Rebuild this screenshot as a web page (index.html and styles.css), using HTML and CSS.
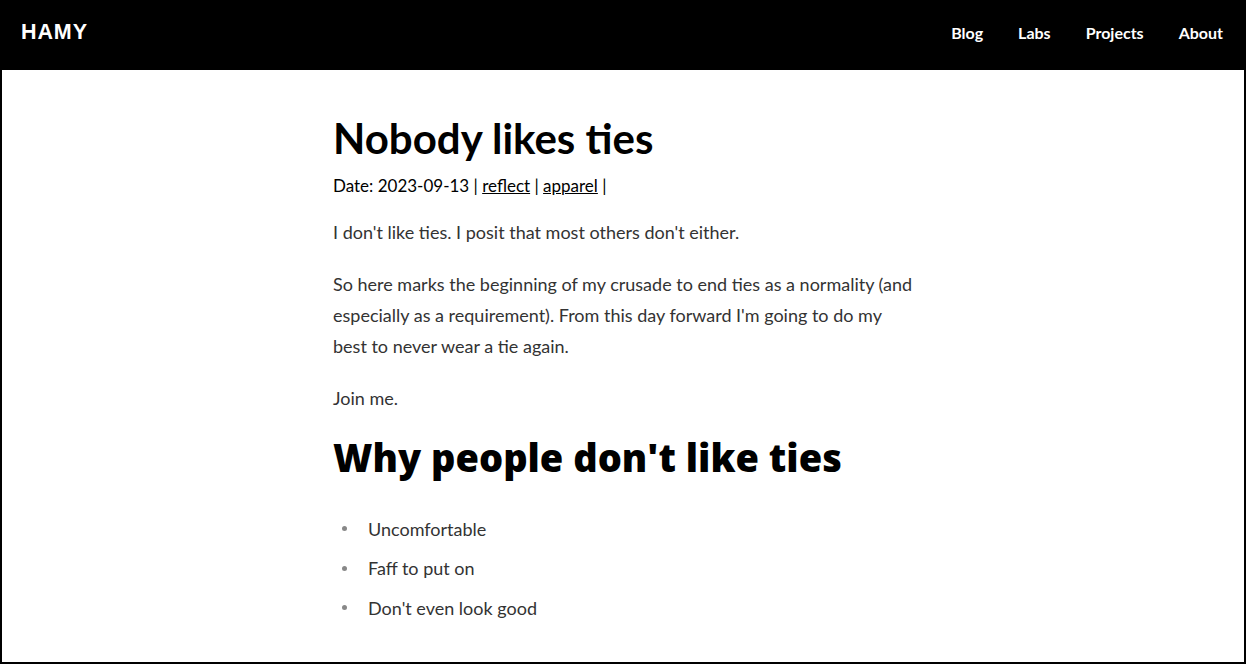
FILE: index.html
```html
<!DOCTYPE html>
<html lang="en">
<head>
<meta charset="utf-8">
<title>Nobody likes ties</title>
<link rel="stylesheet" href="styles.css">
</head>
<body>
<div class="page">
  <header class="topbar">
    <a class="brand" href="#">HAMY</a>
    <nav class="nav">
      <a href="#">Blog</a>
      <a href="#">Labs</a>
      <a href="#">Projects</a>
      <a href="#">About</a>
    </nav>
  </header>
  <main class="post">
    <h1 class="title">Nobody likes ties</h1>
    <p class="meta">Date: 2023-09-13 | <a href="#">reflect</a> | <a href="#">apparel</a> |</p>
    <p>I don't like ties. I posit that most others don't either.</p>
    <p>So here marks the beginning of my crusade to end ties as a normality (and especially as a requirement). From this day forward I'm going to do my best to never wear a tie again.</p>
    <p>Join me.</p>
    <h2 class="section">Why people don't like ties</h2>
    <ul class="list">
      <li>Uncomfortable</li>
      <li>Faff to put on</li>
      <li>Don't even look good</li>
    </ul>
  </main>
</div>
</body>
</html>
```

FILE: styles.css
```css
* { box-sizing: border-box; }
html, body { margin: 0; padding: 0; }
body {
  font-family: Lato, "Open Sans", sans-serif;
  background: #fff;
}
.page {
  border: 2px solid #000;
  border-top: 0;
  height: 664px;
  overflow: hidden;
}
.topbar {
  background: #000;
  height: 70px;
  display: flex;
  align-items: center;
  justify-content: space-between;
  padding: 0 21px 5px 19px;
}
.brand {
  color: #fff;
  text-decoration: none;
  font-family: "Liberation Sans", Arial, sans-serif;
  font-weight: bold;
  font-size: 21.5px;
  letter-spacing: 0.9px;
}
.nav {
  display: flex;
  gap: 35px;
}
.nav a {
  color: #fff;
  text-decoration: none;
  font-weight: bold;
  font-size: 16px;
}
.post {
  max-width: 580px;
  margin: 0 auto;
  color: #333;
  font-size: 18px;
}
.title {
  color: #000;
  font-size: 42px;
  font-weight: 700;
  margin: 43px 0 11px;
  line-height: 1.2;
}
.post p {
  line-height: 31px;
  margin: 0 0 21px;
}
.post p.meta {
  color: #000;
  font-size: 17px;
  line-height: 24px;
  margin-bottom: 19px;
}
.meta a { color: #000; }
.section {
  color: #000;
  font-family: "Open Sans", Lato, sans-serif;
  font-size: 38px;
  font-weight: 800;
  margin: 20.5px 0 36px;
  line-height: 1.2;
}
.list {
  list-style: none;
  padding-left: 9px;
  margin: 0;
}
.list li {
  display: flex;
  align-items: center;
  line-height: 24px;
  margin-bottom: 15.5px;
}
.list li::before {
  content: "";
  width: 5px;
  height: 5px;
  border-radius: 50%;
  background: #888;
  margin-right: 21px;
}
```
